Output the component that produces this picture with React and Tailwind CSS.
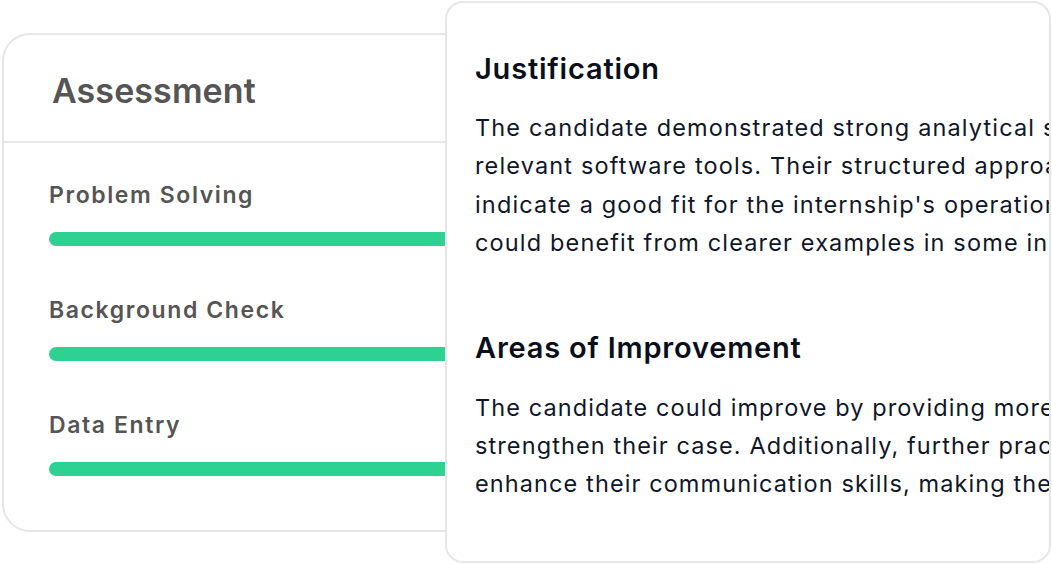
export default function App() {
  const skills = ["Problem Solving", "Background Check", "Data Entry"];
  return (
    <div
      className="relative w-[1052px] h-[564px] overflow-hidden bg-white"
      style={{ fontFamily: "Inter, 'Noto Sans', sans-serif" }}
    >
      <div className="ml-[2px] mt-[33px] w-[640px] h-[499px] rounded-[28px] border-2 border-[#e6e6e6] bg-white">
        <div className="h-[108px] border-b-2 border-[#e8e8e8] pl-[48px] flex items-center pt-[4px]">
          <h2 className="text-[34px] font-semibold text-[#555555] tracking-[0.1px]">Assessment</h2>
        </div>
        <div className="pl-[45px] pt-[38px] flex flex-col gap-[50px]">
          {skills.map((s) => (
            <div key={s} className="flex flex-col gap-[23px]">
              <div className="text-[23px] leading-[28px] font-semibold text-[#555555] tracking-[1.6px]">{s}</div>
              <div className="h-[14px] w-[560px] rounded-full bg-[#2dd192]" />
            </div>
          ))}
        </div>
      </div>

      <div className="absolute left-[445px] top-[1px] w-[606px] h-[562px] rounded-[18px] border-2 border-[#e6e6e6] bg-white overflow-hidden">
        <div className="pl-[28px] pt-[48px] text-[#0f1629] whitespace-nowrap">
          <h3 className="text-[29px] leading-[36px] font-semibold text-[#0a0f1c] tracking-[0.8px]">Justification</h3>
          <p className="mt-[22px] text-[23.5px] leading-[38.4px] tracking-[1.15px]">
            The candidate demonstrated strong analytical skills and proficiency in<br />
            relevant software tools. Their structured approach and clear communication<br />
            indicate a good fit for the internship's operational requirements, though they<br />
            could benefit from clearer examples in some instances.
          </p>
          <h3 className="mt-[67px] text-[29px] leading-[36px] font-semibold text-[#0a0f1c] tracking-[0.8px]">Areas of Improvement</h3>
          <p className="mt-[23px] text-[23.5px] leading-[38.4px] tracking-[1.1px]">
            The candidate could improve by providing more specific examples to<br />
            strengthen their case. Additionally, further practice could help<br />
            enhance their communication skills, making them more effective.
          </p>
        </div>
      </div>
    </div>
  );
}
